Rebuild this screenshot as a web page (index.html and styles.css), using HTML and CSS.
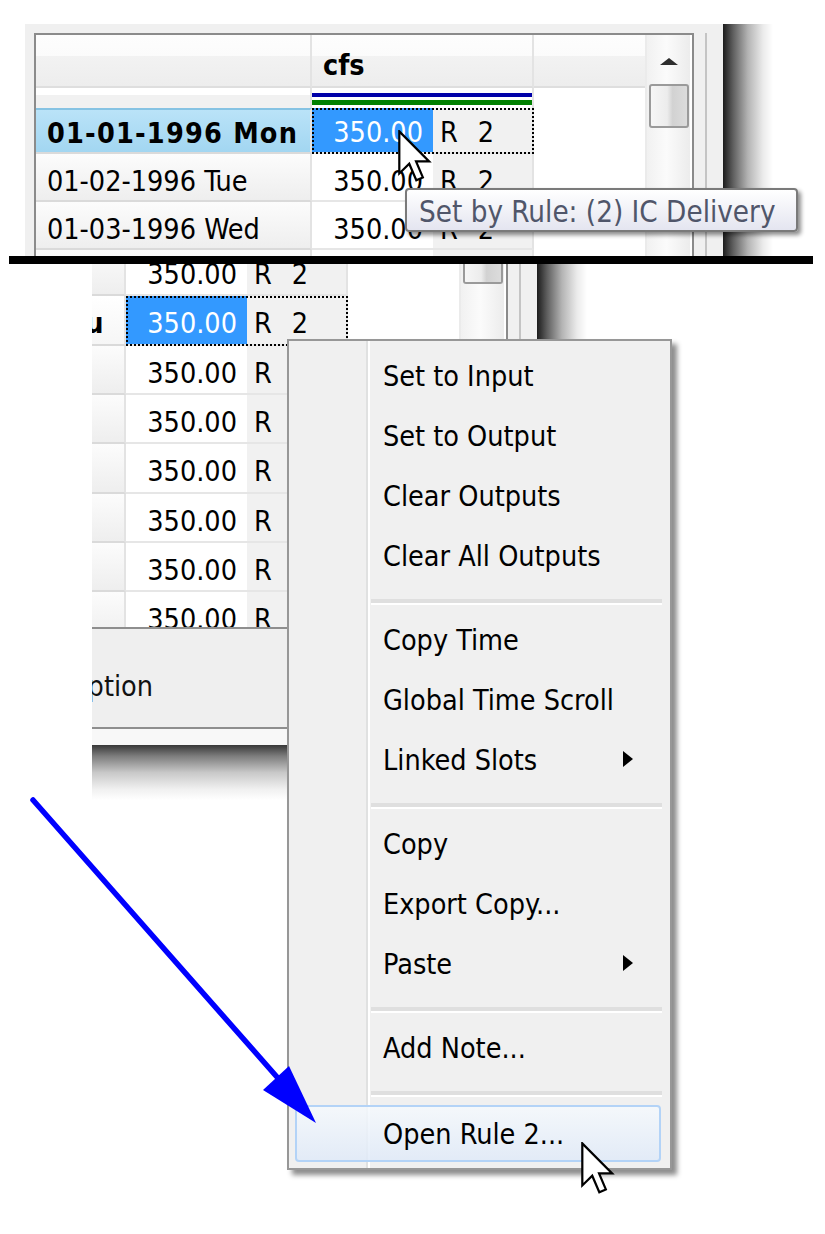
FILE: index.html
```html
<!DOCTYPE html>
<html>
<head>
<meta charset="utf-8">
<link rel="stylesheet" href="styles.css">
</head>
<body>
<section class="top">
  <div class="win">
    <div class="table">
      <div class="cols">
        <div class="hdr">
          <div class="h-cell h-date"></div>
          <div class="h-cell h-val">cfs</div>
          <div class="h-cell h-extra"></div>
        </div>
        <div class="strip">
          <div class="s-date"></div>
          <div class="s-val"><div class="bar-blue"></div><div class="bar-green"></div></div>
          <div class="s-extra"></div>
        </div>
        <div class="row sel row-first">
          <div class="c-date">01-01-1996 Mon</div>
          <div class="c-val"><div class="v-num">350.00</div><div class="v-flag">R<span class="n">2</span></div></div>
          <div class="c-extra"></div>
        </div>
        <div class="row">
          <div class="c-date">01-02-1996 Tue</div>
          <div class="c-val"><div class="v-num">350.00</div><div class="v-flag">R<span class="n">2</span></div></div>
          <div class="c-extra"></div>
        </div>
        <div class="row">
          <div class="c-date">01-03-1996 Wed</div>
          <div class="c-val"><div class="v-num">350.00</div><div class="v-flag">R<span class="n">2</span></div></div>
          <div class="c-extra"></div>
        </div>
        <div class="row">
          <div class="c-date">01-04-1996 Thu</div>
          <div class="c-val"><div class="v-num">350.00</div><div class="v-flag">R<span class="n">2</span></div></div>
          <div class="c-extra"></div>
        </div>
      </div>
      <div class="vscroll">
        <div class="up-arrow"></div>
        <div class="thumb"></div>
      </div>
      <div class="gap2"></div>
    </div>
    <div class="frame-gap"></div>
    <div class="frame-line"></div>
    <div class="frame-end"></div>
  </div>
  <div class="shadow-r"></div>
</section>

<div class="black-bar"></div>

<section class="bottom">
  <div class="bwin-wrap">
    <div class="bwin">
      <div class="bwin-main">
        <div class="table table-b">
          <div class="bgrid">
            <div class="cols cols-b">
              <div class="row row-b first">
                <div class="c-date">01-03-1996 Wed</div>
                <div class="c-val"><div class="v-num">350.00</div><div class="v-flag">R<span class="n">2</span></div></div>
                <div class="c-extra"></div>
              </div>
              <div class="row row-b sel sel-plain">
                <div class="c-date">01-04-1996 Thu</div>
                <div class="c-val"><div class="v-num">350.00</div><div class="v-flag">R<span class="n">2</span></div></div>
                <div class="c-extra"></div>
              </div>
              <div class="row row-b">
                <div class="c-date">01-05-1996 Fri</div>
                <div class="c-val"><div class="v-num">350.00</div><div class="v-flag">R</div></div>
                <div class="c-extra"></div>
              </div>
              <div class="row row-b">
                <div class="c-date">01-06-1996 Sat</div>
                <div class="c-val"><div class="v-num">350.00</div><div class="v-flag">R</div></div>
                <div class="c-extra"></div>
              </div>
              <div class="row row-b">
                <div class="c-date">01-07-1996 Sun</div>
                <div class="c-val"><div class="v-num">350.00</div><div class="v-flag">R</div></div>
                <div class="c-extra"></div>
              </div>
              <div class="row row-b">
                <div class="c-date">01-08-1996 Mon</div>
                <div class="c-val"><div class="v-num">350.00</div><div class="v-flag">R</div></div>
                <div class="c-extra"></div>
              </div>
              <div class="row row-b">
                <div class="c-date">01-09-1996 Tue</div>
                <div class="c-val"><div class="v-num">350.00</div><div class="v-flag">R</div></div>
                <div class="c-extra"></div>
              </div>
              <div class="row row-b">
                <div class="c-date">01-10-1996 Wed</div>
                <div class="c-val"><div class="v-num">350.00</div><div class="v-flag">R</div></div>
                <div class="c-extra"></div>
              </div>
            </div>
            <div class="vscroll"><div class="thumb thumb-end"></div></div>
            <div class="gap2"></div>
          </div>
          <div class="hline"></div>
          <div class="panel"><div class="panel-label">Description</div></div>
          <div class="hline"></div>
          <div class="bstrip"></div>
        </div>
        <div class="frame-gap"></div>
        <div class="frame-line"></div>
        <div class="frame-end"></div>
      </div>
      <div class="bshadow-b"></div>
    </div>
    <div class="shadow-r shadow-rb"></div>
  </div>
</section>

<div class="tooltip">Set by Rule: (2) IC Delivery</div>

<svg class="cursor cur-top" width="34" height="54" viewBox="0 0 13 20.6">
  <path d="M0.5 0.5 V16.6 L4.3 12.9 L7 19.2 L9.5 18.1 L6.9 12 H11.9 Z" fill="#fff" stroke="#000" stroke-width="0.85" stroke-linejoin="miter"/>
</svg>

<div class="menu">
  <div class="mi">Set to Input</div>
  <div class="mi">Set to Output</div>
  <div class="mi">Clear Outputs</div>
  <div class="mi">Clear All Outputs</div>
  <div class="msep"></div>
  <div class="mi">Copy Time</div>
  <div class="mi">Global Time Scroll</div>
  <div class="mi sub">Linked Slots</div>
  <div class="msep"></div>
  <div class="mi">Copy</div>
  <div class="mi">Export Copy...</div>
  <div class="mi sub">Paste</div>
  <div class="msep"></div>
  <div class="mi">Add Note...</div>
  <div class="msep"></div>
  <div class="mi hot">Open Rule 2...</div>
</div>

<svg class="arrow" width="825" height="1234" viewBox="0 0 825 1234">
  <line x1="33" y1="800" x2="284" y2="1085" stroke="#0000ff" stroke-width="5.5" stroke-linecap="round"/>
  <polygon points="263,1090 289,1066 316,1123" fill="#0000ff"/>
</svg>

<svg class="cursor cur-bottom" width="34" height="54" viewBox="0 0 13 20.6">
  <path d="M0.5 0.5 V16.6 L4.3 12.9 L7 19.2 L9.5 18.1 L6.9 12 H11.9 Z" fill="#fff" stroke="#000" stroke-width="0.85" stroke-linejoin="miter"/>
</svg>
</body>
</html>
```

FILE: styles.css
```css
* { box-sizing: border-box; }
html, body { margin: 0; padding: 0; }
body {
  width: 825px;
  height: 1234px;
  overflow: hidden;
  position: relative;
  background: #fff;
  color: #000;
  font-family: "DejaVu Sans Condensed", "DejaVu Sans", sans-serif;
  font-stretch: condensed;
  font-size: 28.5px;
}

/* ---------- top window ---------- */
.top {
  height: 256px;
  padding: 24px 0 0 25px;
  display: flex;
  overflow: hidden;
}
.win {
  width: 698px;
  height: 232px;
  flex: none;
  display: flex;
  padding: 9px 0 0 9px;
  background: #f0f0f0;
  overflow: hidden;
}
.table {
  width: 660px;
  flex: none;
  display: flex;
  border: 2px solid #8b8b8b;
  border-bottom: 0;
  background: #fff;
}
.cols {
  width: 609px;
  flex: none;
  display: flex;
  flex-direction: column;
}
.vscroll {
  width: 45px;
  flex: none;
  border-left: 2px solid #ebebeb;
  background: linear-gradient(to right, #f1f1f1, #fbfbfb 45%, #ececec);
  display: flex;
  flex-direction: column;
  align-items: center;
}
.up-arrow {
  margin-top: 23px;
  width: 0;
  height: 0;
  border-left: 9px solid transparent;
  border-right: 9px solid transparent;
  border-bottom: 7px solid #2e2e2e;
}
.thumb {
  margin-top: 19px;
  width: 40px;
  height: 44px;
  border: 2px solid #9a9a9a;
  border-radius: 3px;
  background: linear-gradient(to right, #f6f6f6, #ececec 45%, #d2d2d2 60%, #dcdcdc);
}
.thumb-end {
  margin-top: 0;
  height: 20px;
  border-top: 0;
  border-radius: 0 0 3px 3px;
}
.gap2 { width: 2px; flex: none; background: #fff; }
.frame-gap { width: 11px; flex: none; }
.frame-line { width: 2px; flex: none; background: #c4c4c4; }
.frame-end { width: 16px; flex: none; }
.shadow-r {
  width: 50px;
  height: 232px;
  flex: none;
  background: linear-gradient(to right, #1c1c1c, #5e5e5e 20%, #b4b4b4 50%, #ebebeb 80%, #fff);
}

/* header */
.hdr { display: flex; height: 53px; flex: none; }
.h-cell {
  border-right: 2px solid #e3e3e3;
  border-bottom: 2px solid #dedede;
  background: linear-gradient(#fdfdfd 0, #fbfbfb 42%, #f2f2f2 42%, #ededed 100%);
}
.h-date { width: 276px; }
.h-val {
  width: 222px;
  font-weight: bold;
  padding: 14px 0 0 11px;
}
.h-extra { width: 111px; border-right: 0; }

/* color strip */
.strip { display: flex; height: 20px; flex: none; }
.s-date {
  width: 276px;
  border-right: 2px solid #e3e3e3;
  background: linear-gradient(#ffffff 0, #ffffff 35%, #f1f1f1 35%, #f1f1f1 100%);
}
.s-val { width: 222px; padding-top: 5px; border-right: 2px solid #e3e3e3; }
.bar-blue { height: 4px; background: #0000a8; }
.bar-green { height: 5px; margin-top: 3px; background: #008000; }
.s-extra { width: 111px; }

/* rows */
.row { display: flex; height: 48px; flex: none; }
.row.row-first { height: 46px; }
.c-date {
  width: 276px;
  flex: none;
  border-right: 2px solid #e3e3e3;
  border-bottom: 2px solid #dadada;
  background: linear-gradient(#fcfcfc, #eeeeee);
  padding: 8px 0 0 11px;
  display: flex;
  align-items: center;
  white-space: nowrap;
  overflow: hidden;
}
.c-val {
  width: 222px;
  flex: none;
  display: flex;
  border-right: 2px solid #e3e3e3;
  border-bottom: 2px solid #e6e6e6;
}
.v-num {
  width: 121px;
  flex: none;
  padding: 8px 10px 0 0;
  background: #fff;
  display: flex;
  align-items: center;
  justify-content: flex-end;
}
.v-flag {
  flex: 1;
  background: #f1f1f1;
  padding: 8px 0 0 7px;
  display: flex;
  align-items: center;
}
.v-flag .n { margin-left: 20px; }
.c-extra { width: 111px; flex: none; background: #fff; }

.row.sel .c-date {
  background: linear-gradient(#bae3f8, #a2d6f1);
  border-top: 2px solid #86c3e3;
  font-weight: bold;
  letter-spacing: 1.2px;
  padding-top: 4px;
}
.row.sel .v-num, .row.sel .v-flag { padding-top: 4px; }
.row.sel .c-val { outline: 2px dotted #000; outline-offset: -2px; }
.row.sel .v-num { background: #3399ff; color: #fff; }
.row.sel.sel-plain .c-date { background: linear-gradient(#ffffff, #f6f6f6); border-top: 0; padding-top: 8px; }
.row-b.sel .v-num, .row-b.sel .v-flag { padding-top: 8px; }

/* ---------- tooltip ---------- */
.tooltip {
  position: absolute;
  left: 405px;
  top: 188px;
  width: 393px;
  height: 44px;
  border: 2px solid #7a7a7a;
  border-radius: 4px;
  background: linear-gradient(#ffffff, #e4e5f0);
  box-shadow: 3px 3px 4px rgba(0,0,0,0.45);
  color: #50566a;
  font-size: 29.3px;
  padding: 2px 0 0 12px;
  line-height: 40px;
  white-space: nowrap;
}

/* ---------- separator bar ---------- */
.black-bar {
  height: 8px;
  width: 804px;
  margin-left: 9px;
  background: #000;
}

/* ---------- bottom (scrolled) window ---------- */
.bottom {
  height: 536px;
  margin-left: 92px;
  overflow: hidden;
}
.bwin-wrap {
  margin-left: -253px;
  display: flex;
  align-items: flex-start;
}
.bwin { width: 698px; flex: none; }
.bwin-main {
  display: flex;
  height: 481px;
  padding-left: 9px;
  background: #f0f0f0;
}
.table-b { flex-direction: column; border-top: 0; }
.bgrid { display: flex; height: 363px; flex: none; }
.cols-b { overflow: hidden; height: 363px; }
.row-b { height: 49.33px; }
.row-b.first { margin-top: -17px; }
.hline { height: 2px; flex: none; background: #8e8e8e; }
.panel {
  height: 98px;
  flex: none;
  background: #efefef;
  display: flex;
  align-items: center;
  padding-top: 17px;
  color: #111;
}
.panel-label { width: 303px; text-align: right; white-space: nowrap; }
.bstrip { height: 16px; flex: none; background: #f8f8f8; }
.bshadow-b {
  height: 55px;
  background: linear-gradient(#383838, #7c7c7c 20%, #c8c8c8 50%, #f0f0f0 80%, #fff);
}
.shadow-rb { height: 481px; }

/* ---------- context menu ---------- */
.menu {
  position: absolute;
  left: 287px;
  top: 339px;
  width: 385px;
  height: 831px;
  border: 2px solid #979797;
  background: #f0f0f0 linear-gradient(to right, transparent 77px, #e0e1e1 77px, #e0e1e1 79px, #ffffff 79px, #ffffff 81px, transparent 81px);
  box-shadow: 5px 5px 5px rgba(0,0,0,0.45);
  padding-top: 5px;
}
.mi {
  position: relative;
  height: 60px;
  margin: 0 9px 0 6px;
  padding-left: 86px;
  border: 2px solid transparent;
  border-radius: 4px;
  display: flex;
  align-items: center;
  white-space: nowrap;
}
.mi.sub::after {
  content: "";
  position: absolute;
  right: 26px;
  top: 50%;
  margin-top: -9px;
  border-left: 10px solid #000;
  border-top: 8px solid transparent;
  border-bottom: 8px solid transparent;
}
.mi.hot {
  margin-top: 3px;
  height: 57px;
  padding-top: 2px;
  border-color: #b3d3f7;
  background: linear-gradient(rgba(245,249,253,0.85), rgba(224,234,248,0.85));
}
.msep {
  height: 24px;
  padding-top: 13px;
  margin: 0 8px 0 82px;
}
.msep::before {
  content: "";
  display: block;
  height: 4px;
  background: #dfdfdf;
  border-bottom: 2px solid #fff;
}

/* ---------- overlays ---------- */
.arrow { position: absolute; left: 0; top: 0; pointer-events: none; }
.cursor { position: absolute; pointer-events: none; }
.cur-top { left: 398px; top: 130px; }
.cur-bottom { left: 581px; top: 1142px; }
```
